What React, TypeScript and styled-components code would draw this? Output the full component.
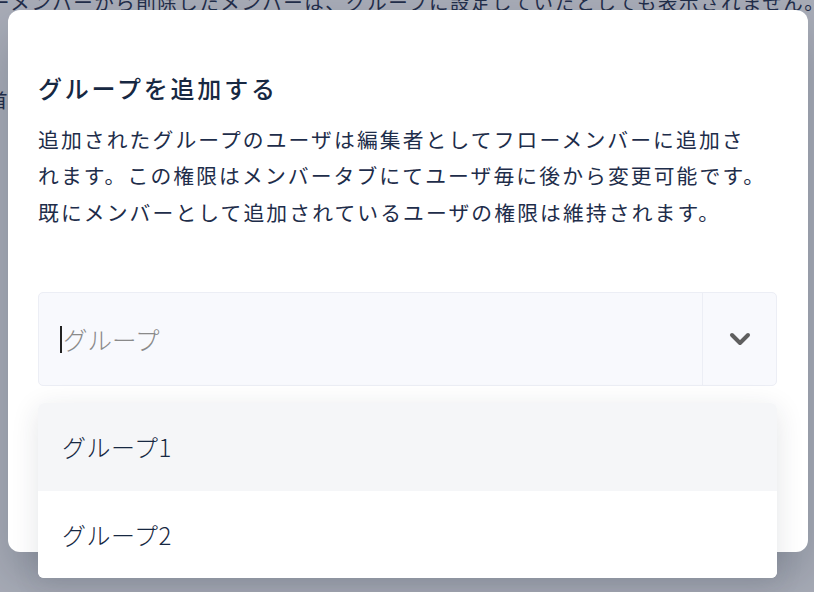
import styled, { createGlobalStyle } from 'styled-components'

const GlobalStyle = createGlobalStyle`
  html, body {
    margin: 0;
    padding: 0;
    width: 814px;
    height: 592px;
    overflow: hidden;
    background: #ffffff;
    font-family: 'Noto Sans CJK JP', 'Noto Sans', sans-serif;
  }
`

// Page that sits behind the modal
const Page = styled.div`
  position: relative;
  width: 814px;
  height: 592px;
  overflow: hidden;
  background: #ffffff;
`

const BgLine = styled.p<{ $top: number; $left: number }>`
  position: absolute;
  top: ${(p) => p.$top}px;
  left: ${(p) => p.$left}px;
  margin: 0;
  white-space: nowrap;
  font-size: 19.5px;
  line-height: 36px;
  letter-spacing: 1.5px;
  color: #1e2d4a;
`

const Overlay = styled.div`
  position: absolute;
  inset: 0;
  background: rgba(37, 48, 75, 0.4);
  padding: 10px 6px 0 8px;
  box-sizing: border-box;
`

const Modal = styled.div`
  width: 800px;
  height: 542px;
  box-sizing: border-box;
  padding: 60px 31px 0 30px;
  background: #ffffff;
  border-radius: 12px;
  box-shadow: 0 24px 48px rgba(20, 30, 50, 0.22);
`

const Title = styled.h2`
  margin: 0;
  font-size: 24px;
  line-height: 36px;
  font-weight: 500;
  letter-spacing: 2.8px;
  color: #172842;
`

const Description = styled.p`
  margin: 15px 0 0;
  font-size: 20.8px;
  line-height: 36.4px;
  letter-spacing: 2.1px;
  color: #1e2d4a;
  white-space: nowrap;
`

const SelectWrap = styled.div`
  position: relative;
  margin-top: 62px;
`

const SelectBox = styled.div`
  display: flex;
  height: 94px;
  box-sizing: border-box;
  background: #f8f9fd;
  border: 1px solid #eceef5;
  border-radius: 5px;
`

const InputArea = styled.div`
  flex: 1;
  display: flex;
  align-items: center;
  padding-left: 21px;
`

const Caret = styled.span`
  width: 2px;
  height: 27px;
  background: #222;
  margin-right: 1px;
`

const Placeholder = styled.span`
  font-size: 24.5px;
  font-weight: 300;
  color: #8a8a8a;
`

const ToggleButton = styled.div`
  width: 73px;
  border-left: 1px solid #eceef5;
  display: flex;
  align-items: center;
  justify-content: center;
`

const Menu = styled.ul`
  position: absolute;
  top: calc(100% + 17px);
  left: 0;
  right: 0;
  margin: 0;
  padding: 0;
  list-style: none;
  background: #ffffff;
  border-radius: 6px;
  overflow: hidden;
  box-shadow: 0 6px 28px rgba(30, 40, 60, 0.12);
`

const MenuItem = styled.li<{ $active?: boolean }>`
  height: 87.5px;
  display: flex;
  align-items: center;
  padding-left: 24px;
  font-size: 24px;
  font-weight: 300;
  letter-spacing: 0.5px;
  color: #172842;
  background: ${(p) => (p.$active ? '#f5f6f8' : '#ffffff')};
`

function Chevron() {
  return (
    <svg width="22" height="14" viewBox="0 0 22 14">
      <polyline
        points="3,3 11,11 19,3"
        fill="none"
        stroke="#5f5f5f"
        strokeWidth="4"
        strokeLinecap="round"
        strokeLinejoin="round"
      />
    </svg>
  )
}

export default function App() {
  return (
    <>
      <GlobalStyle />
      <Page>
        <BgLine $top={-16} $left={-10}>
          ーメンバーから削除したメンバーは、グループに設定していたとしても表示されません。
        </BgLine>
        <BgLine $top={82} $left={-12}>
          首
        </BgLine>
        <Overlay>
          <Modal>
            <Title>グループを追加する</Title>
            <Description>
              追加されたグループのユーザは編集者としてフローメンバーに追加さ
              <br />
              れます。この権限はメンバータブにてユーザ毎に後から変更可能です。
              <br />
              既にメンバーとして追加されているユーザの権限は維持されます。
            </Description>
            <SelectWrap>
              <SelectBox>
                <InputArea>
                  <Caret />
                  <Placeholder>グループ</Placeholder>
                </InputArea>
                <ToggleButton>
                  <Chevron />
                </ToggleButton>
              </SelectBox>
              <Menu>
                <MenuItem $active>グループ1</MenuItem>
                <MenuItem>グループ2</MenuItem>
              </Menu>
            </SelectWrap>
          </Modal>
        </Overlay>
      </Page>
    </>
  )
}
